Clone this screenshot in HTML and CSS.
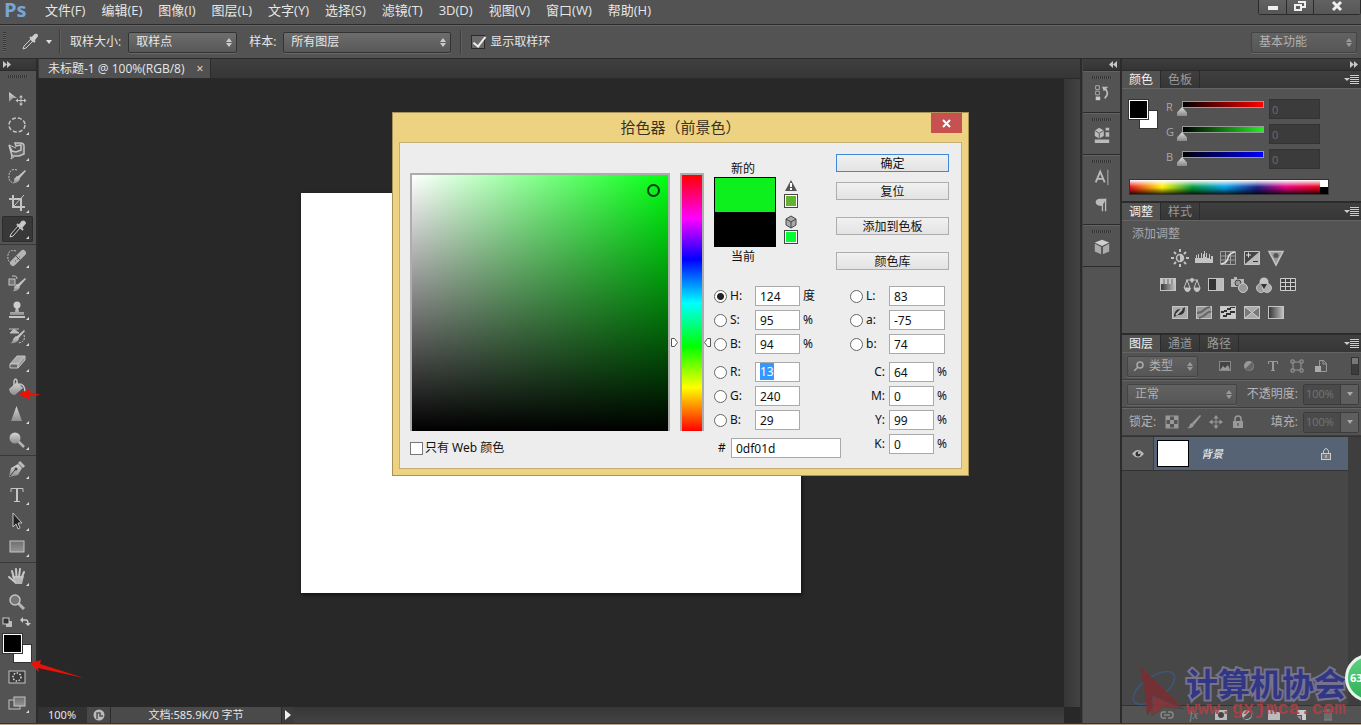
FILE: index.html
```
<!DOCTYPE html>
<html lang="zh-CN">
<head>
    <meta charset="UTF-8">
    <meta name="viewport" content="width=device-width, initial-scale=1.0">
    <title>未标题-1 @ 100%(RGB/8)</title>
    <link rel="stylesheet" href="styles.css">
</head>
<body>
    <!-- gradients shared by the icons -->
    <svg class="defs" width="0" height="0">
        <defs>
            <linearGradient id="metal" x1="0" y1="0" x2="0" y2="1"><stop offset="0" stop-color="#d6d6d6"/><stop offset="1" stop-color="#8e8e8e"/></linearGradient>
            <linearGradient id="fade" x1="0" y1="0" x2="1" y2="0"><stop offset="0" stop-color="#333"/><stop offset="1" stop-color="#c4c4c4"/></linearGradient>
            <linearGradient id="plate" x1="0" y1="0" x2="0" y2="1"><stop offset="0" stop-color="#6e6e6e"/><stop offset="1" stop-color="#949494"/></linearGradient>
        </defs>
    </svg>

    <header class="menubar">
        <div class="logo">Ps</div>
        <nav class="menu">
            <a href="#">文件(F)</a>
            <a href="#">编辑(E)</a>
            <a href="#">图像(I)</a>
            <a href="#">图层(L)</a>
            <a href="#">文字(Y)</a>
            <a href="#">选择(S)</a>
            <a href="#">滤镜(T)</a>
            <a href="#">3D(D)</a>
            <a href="#">视图(V)</a>
            <a href="#">窗口(W)</a>
            <a href="#">帮助(H)</a>
        </nav>
        <div class="window-buttons">
            <button aria-label="最小化"><svg width="12" height="12"><rect x="1" y="6" width="10" height="4" fill="#eee"/></svg></button>
            <button aria-label="还原"><svg width="14" height="12"><path d="M5 2h7v5H8M2 5h6v5H2z" fill="none" stroke="#eee" stroke-width="2"/></svg></button>
            <button class="wide" aria-label="关闭"><svg width="12" height="12"><path d="M2 2l8 8M10 2l-8 8" stroke="#eee" stroke-width="3"/></svg></button>
        </div>
    </header>

    <div class="options">
        <span class="grip-v"></span>
        <svg class="opt-tool" width="18" height="18" viewBox="0 0 18 18"><path d="M10 6l2 2-7 7-3 1 1-3z" fill="#555" stroke="#ccc"/><path d="M9 4l5 5M10 6l4-4q2-1 2 1l-4 5z" fill="#d8d8d8" stroke="#ccc" stroke-width="2"/></svg>
        <span class="caret"></span>
        <span class="divider"></span>
        <label for="sample-size">取样大小:</label>
        <span class="select size-m"><select id="sample-size"><option>取样点</option></select></span>
        <label for="sample">样本:</label>
        <span class="select size-l"><select id="sample"><option>所有图层</option></select></span>
        <span class="divider"></span>
        <label class="check"><input type="checkbox" checked>显示取样环</label>
        <span class="select size-s dim push"><select aria-label="工作区"><option>基本功能</option></select></span>
    </div>

    <div class="workspace">
        <aside class="tools">
            <div class="strip-head left"><svg width="8" height="7"><path d="M0 0l4 3.500L0 7zM4 0l4 3.500L4 7z" fill="#c8c8c8"/></svg></div>
            <div class="grip"></div>
            <div class="tool-group">
                <button class="tool plain" aria-label="移动"><svg viewBox="0 0 20 20"><path d="M2 3l8 6H6l-4 4z" fill="url(#metal)"/><path d="M14 7v9M9.500 11.500h9" stroke="#c4c4c4"/><path d="M12 8.500l2-2.500 2 2.500zM12 14.500l2 2.500 2-2.500zM11 9.500l-2.500 2 2.500 2zM17 9.500l2.500 2-2.500 2z" fill="#c4c4c4"/></svg></button>
                <button class="tool" aria-label="椭圆选框"><svg viewBox="0 0 20 20"><ellipse cx="10" cy="10" rx="8" ry="7" fill="none" stroke="#c4c4c4" stroke-width="1.500" stroke-dasharray="4 2"/></svg></button>
                <button class="tool" aria-label="套索"><svg viewBox="0 0 20 20"><path d="M2 4l3 11h7l5-2V5q0-3-4-3H8l1 3 5-1v5l-5 2-4-1z" fill="#666" stroke="#c4c4c4" stroke-width="1.500"/><path d="M2 4l7 3M5 14l-1 4 3-2" fill="none" stroke="#c4c4c4"/></svg></button>
                <button class="tool" aria-label="快速选择"><svg viewBox="0 0 20 20"><path d="M10 3Q3 1 2 8t5 8" fill="none" stroke="#c4c4c4" stroke-dasharray="2 1"/><path d="M18 3l1 1-7 8-2-2z" fill="#c4c4c4"/><path d="M10 9l3 3q-2 5-8 4 3-1 2-4z" fill="url(#metal)"/></svg></button>
                <button class="tool" aria-label="裁剪"><svg viewBox="0 0 20 20"><path d="M2 6h12v12M6 2v12h12" fill="none" stroke="#c4c4c4" stroke-width="2"/><path d="M7 13L17 2" stroke="#c4c4c4"/></svg></button>
                <button class="tool active" aria-label="吸管"><svg viewBox="0 0 20 20"><path d="M11 7l2 2-7 8-3 1 1-3z" fill="#333" stroke="#ccc"/><path d="M10 5l6 6M12 7l3-4q2-1 3 1l-4 5z" fill="#d0d0d0" stroke="#c4c4c4" stroke-width="2"/></svg></button>
            </div>
            <div class="tool-group">
                <button class="tool" aria-label="修复画笔"><svg viewBox="0 0 20 20"><path d="M9 3Q2 1 1 7t4 9" fill="none" stroke="#c4c4c4" stroke-dasharray="2 1"/><path d="M6 15l10-10" stroke="#b5b5b5" stroke-width="6" stroke-linecap="round"/><path d="M9 8l5 5M8 13h1M10 11h1M12 9h1" stroke="#555"/></svg></button>
                <button class="tool" aria-label="画笔"><svg viewBox="0 0 20 20"><rect x="2" y="5" width="6" height="6" fill="#777" stroke="#c4c4c4"/><path d="M5 2h3q2 0 2 3" fill="none" stroke="#c4c4c4"/><path d="M18 4l1 1-7 8-2-2z" fill="#c4c4c4"/><path d="M10 10l3 3q-2 5-8 4 3-1 2-4z" fill="url(#metal)"/></svg></button>
                <button class="tool" aria-label="仿制图章"><svg viewBox="0 0 20 20"><circle cx="10" cy="5" r="3.500" fill="#ccc"/><path d="M9 7h2l1 5h5v3H3v-3h5z" fill="url(#metal)"/><path d="M2 17h16" stroke="#c4c4c4" stroke-width="2"/></svg></button>
                <button class="tool" aria-label="历史记录画笔"><svg viewBox="0 0 20 20"><path d="M2 3h10M3 7l4-4 5 4z" stroke="#bbb" fill="#bbb"/><path d="M17 4l1 1-7 8-2-2z" fill="#c4c4c4"/><path d="M9 10l3 3q-2 5-9 4 3-1 3-4z" fill="url(#metal)"/><path d="M17 9q2 7-6 8" fill="none" stroke="#c4c4c4" stroke-dasharray="2 1"/></svg></button>
                <button class="tool" aria-label="橡皮擦"><svg viewBox="0 0 20 20"><path d="M3 12l7-8h8l-7 8z" fill="#aaa" stroke="#c4c4c4"/><path d="M3 12h8v4H3z" fill="#666" stroke="#c4c4c4"/><path d="M11 12l7-8v4l-7 8z" fill="#999" stroke="#c4c4c4"/></svg></button>
                <button class="tool" aria-label="油漆桶"><svg viewBox="0 0 20 20"><path d="M2 11l8-7 6 6-8 7q-5 0-6-6z" fill="url(#metal)"/><path d="M7 8V3q2-4 3 0v5M12 6q6 0 6 8" fill="none" stroke="#c4c4c4" stroke-width="1.500"/></svg></button>
                <button class="tool" aria-label="锐化"><svg viewBox="0 0 20 20"><path d="M9.500 2l5.500 15H4z" fill="url(#metal)"/></svg></button>
                <button class="tool" aria-label="减淡"><svg viewBox="0 0 20 20"><path d="M10 10l7 7" stroke="#b5b5b5" stroke-width="2.500"/><circle cx="8" cy="8" r="5.500" fill="url(#metal)"/></svg></button>
            </div>
            <div class="tool-group">
                <button class="tool" aria-label="钢笔"><svg viewBox="0 0 20 20"><path d="M2 18l2-9 7-4 4 4-4 7z" fill="url(#metal)"/><path d="M12 3l5 5" stroke="#bbb" stroke-width="3"/><path d="M3 17l5-6" stroke="#444"/><circle cx="9" cy="10" r="1.500" fill="#444"/></svg></button>
                <button class="tool" aria-label="文字"><svg viewBox="0 0 20 20"><path d="M4 7V3.500h12V7M7 16.500h6" fill="none" stroke="#c4c4c4"/><path d="M10 3v13" stroke="#c4c4c4" stroke-width="2"/></svg></button>
                <button class="tool" aria-label="路径选择"><svg viewBox="0 0 20 20"><path d="M6 2l9 10h-4l2 5-2 1-2-5-3 3z" fill="#222" stroke="#c4c4c4"/></svg></button>
                <button class="tool" aria-label="矩形"><svg viewBox="0 0 20 20"><rect x="3" y="4" width="14" height="11" fill="url(#plate)" stroke="#c4c4c4"/></svg></button>
            </div>
            <div class="tool-group">
                <button class="tool" aria-label="抓手"><svg viewBox="0 0 20 20"><path d="M5 10h12l-2 8H8z" fill="#b5b5b5"/><path d="M7 12L5 5M9.500 11L9 3M12 11l1-8M14.500 12L17 6M8 16l-6-5" stroke="#c8c8c8" stroke-width="2" stroke-linecap="round"/></svg></button>
                <button class="tool plain" aria-label="缩放"><svg viewBox="0 0 20 20"><path d="M11 11l6 6" stroke="#b5b5b5" stroke-width="3"/><circle cx="8" cy="8" r="5" fill="#777" stroke="#c4c4c4" stroke-width="1.500"/></svg></button>
            </div>
            <div class="swap">
                <svg width="11" height="10"><rect x="4" y="4" width="6" height="6" fill="#bbb"/><rect x="1" y="1" width="6" height="6" fill="#333" stroke="#ccc"/></svg>
                <svg width="11" height="10"><path d="M2 3h4q2 0 2 4" fill="none" stroke="#ccc" stroke-width="1.500"/><path d="M0 3l3-3v6zM5 6h6l-3 3z" fill="#ccc"/></svg>
            </div>
            <div class="swatches"><span class="bg"></span><span class="fg"></span></div>
            <button class="tool plain" aria-label="快速蒙版"><svg viewBox="0 0 20 20"><rect x="2" y="4" width="16" height="12" fill="#3c3c3c" stroke="#c4c4c4"/><circle cx="10" cy="10" r="4" fill="none" stroke="#ddd" stroke-width="1.500" stroke-dasharray="1.500 1.500"/></svg></button>
            <button class="tool" aria-label="屏幕模式"><svg viewBox="0 0 20 20"><rect x="2" y="7" width="11" height="9" fill="#555" stroke="#c4c4c4"/><rect x="7" y="4" width="11" height="9" fill="url(#plate)" stroke="#c4c4c4"/></svg></button>
        </aside>

        <main class="document">
            <div class="doc-tabs">
                <div class="doc-tab">未标题-1 @ 100%(RGB/8)<button aria-label="关闭文档">×</button></div>
            </div>
            <div class="stage">
                <div class="canvas-area"><div class="paper"></div></div>
                <div class="v-scroll"></div>
            </div>
            <footer class="status">
                <span class="zoom-level">100%</span>
                <span class="status-icon"><svg width="12" height="12"><circle cx="6" cy="6" r="5.500" fill="#bbb"/><path d="M4 10V4h3v3h3" fill="none" stroke="#555" stroke-width="1.500"/></svg></span>
                <span class="doc-size">文档:585.9K/0 字节</span>
                <button class="status-more" aria-label="更多"></button>
                <span class="h-scroll"></span>
            </footer>
        </main>

        <aside class="dock">
            <div class="strip-head right"><svg width="8" height="7"><path d="M4 0L0 3.500 4 7zM8 0L4 3.500 8 7z" fill="#c8c8c8"/></svg></div>
            <div class="dock-group">
                <div class="grip"></div>
                <button aria-label="历史记录"><svg viewBox="0 0 20 20"><path d="M3 2h4v4H3zM3 8h4v4H3z" fill="#444" stroke="#bbb"/><path d="M3 14h5v4H3z" fill="#ccc"/><path d="M10 3h7l-5 5z" fill="#bbb"/><path d="M13 5q6 5 0 11" fill="none" stroke="#bbb" stroke-width="2"/></svg></button>
            </div>
            <div class="dock-group">
                <div class="grip"></div>
                <button aria-label="属性"><svg viewBox="0 0 20 20"><path d="M2 5l5-3 5 3v6l-5 3-5-3z" fill="#bbb"/><path d="M2 5l5 3 5-3M7 8v6" fill="none" stroke="#555"/><path d="M14 2h4v3h-4zM14 7h4v5h-4zM2 15h16v4H2z" fill="#bbb"/></svg></button>
            </div>
            <div class="dock-group">
                <div class="grip"></div>
                <button aria-label="字符"><svg viewBox="0 0 20 20"><path d="M3 16L8 4l5 12M5 12h6" fill="none" stroke="#bbb" stroke-width="2"/><path d="M16.500 2v17" stroke="#bbb"/></svg></button>
                <button aria-label="段落"><svg viewBox="0 0 20 20"><path d="M15 3H8q-5 0-5 4t7 4z" fill="#bbb"/><path d="M10.500 4v13M14 3v14" stroke="#bbb" stroke-width="1.500"/></svg></button>
            </div>
            <div class="dock-group">
                <div class="grip"></div>
                <button aria-label="3D"><svg viewBox="0 0 20 20"><path d="M2 5l8-3 8 3-8 4z" fill="#d0d0d0"/><path d="M2 6l7 4v8l-7-3zM18 6l-7 4v8l7-3z" fill="#aaa"/></svg></button>
            </div>
        </aside>

        <aside class="panels">
            <div class="strip-head right"><svg width="8" height="7"><path d="M0 0l4 3.500L0 7zM4 0l4 3.500L4 7z" fill="#c8c8c8"/></svg></div>

            <section class="panel">
                <div class="tabs"><button class="on">颜色</button><button>色板</button><span class="panel-menu"></span></div>
                <div class="color-body">
                    <div class="swatches small"><span class="bg"></span><span class="fg"></span></div>
                    <div class="channels">
                        <div class="channel">
                            <label for="ch-r">R</label>
                            <div class="slider"><div class="ramp ramp-r"></div><input id="ch-r" type="range" min="0" max="255" value="0"></div>
                            <input type="text" value="0" aria-label="R 值">
                        </div>
                        <div class="channel">
                            <label for="ch-g">G</label>
                            <div class="slider"><div class="ramp ramp-g"></div><input id="ch-g" type="range" min="0" max="255" value="0"></div>
                            <input type="text" value="0" aria-label="G 值">
                        </div>
                        <div class="channel">
                            <label for="ch-b">B</label>
                            <div class="slider"><div class="ramp ramp-b"></div><input id="ch-b" type="range" min="0" max="255" value="0"></div>
                            <input type="text" value="0" aria-label="B 值">
                        </div>
                    </div>
                </div>
                <div class="spectrum"><span class="rainbow"></span><span class="bw"></span></div>
            </section>

            <section class="panel">
                <div class="tabs"><button class="on">调整</button><button>样式</button><span class="panel-menu"></span></div>
                <div class="adjust">
                    <p>添加调整</p>
                    <div class="icon-row">
                        <svg viewBox="0 0 18 18"><circle cx="9" cy="9" r="3.500" fill="#555" stroke="#c4c4c4" stroke-width="1.500"/><path d="M9 5.500v7a3.500 3.500 0 0 0 0-7z" fill="#c4c4c4"/><path d="M9 0v3M9 15v3M0 9h3M15 9h3M3 3l2 2M13 13l2 2M15 3l-2 2M5 13l-2 2" stroke="#c4c4c4" stroke-width="2"/></svg>
                        <svg viewBox="0 0 18 18"><path d="M0 14V9h1V6h1v3h1V5h1v4h2V4h1v5h1V5h1V2h1v6h1V4h1v5h2V5h1v5h1V7h2v7z" fill="#c4c4c4"/></svg>
                        <svg viewBox="0 0 18 18"><path d="M1.500 2.500h15v13h-15zM6.500 2v14M11.500 2v14M1 7h16M1 11h16" fill="none" stroke="#a0a0a0"/><path d="M2 15Q8 14 9 9t7-6" fill="none" stroke="#ddd" stroke-width="1.500"/></svg>
                        <svg viewBox="0 0 18 18"><path d="M1.500 2.500h15v13h-15z" fill="#444" stroke="#c4c4c4"/><path d="M16 3v12H2z" fill="#b8b8b8"/><path d="M3 6h5M5.500 3.500v5" stroke="#ddd"/><path d="M10 12.500h5" stroke="#333"/></svg>
                        <svg viewBox="0 0 18 18"><path d="M2 2.500h14L9 16z" fill="#999" stroke="#c4c4c4" stroke-width="1.500"/><circle cx="9" cy="6.500" r="2.500" fill="#555"/></svg>
                    </div>
                    <div class="icon-row">
                        <svg viewBox="0 0 18 18"><rect x="1.500" y="2.500" width="15" height="12" fill="url(#fade)" stroke="#c4c4c4"/><path d="M2 3h14v5H2z" fill="#c4c4c4"/><path d="M5 3v5M9 3v5M13 3v5" stroke="#666"/></svg>
                        <svg viewBox="0 0 18 18"><path d="M3 4h12M9 2v5M4 4L1 12h6zM14 4l-3 8h6z" fill="none" stroke="#c4c4c4"/><path d="M1 12h7q-1 4-3.500 4T1 12zM10.500 12h7q-1 4-3.500 4t-3.500-4z" fill="#c4c4c4"/><circle cx="9" cy="4" r="2" fill="#c4c4c4"/></svg>
                        <svg viewBox="0 0 18 18"><rect x="1.500" y="2.500" width="15" height="12" fill="#333" stroke="#c4c4c4"/><rect x="9" y="3" width="7" height="11" fill="#bbb"/></svg>
                        <svg viewBox="0 0 18 18"><path d="M0 3h3V1h3v2h7v8H0z" fill="#b8b8b8"/><circle cx="7" cy="7" r="3" fill="#999" stroke="#444"/><circle cx="12" cy="12" r="4.500" fill="#999" stroke="#ccc"/></svg>
                        <svg viewBox="0 0 18 18"><circle cx="9" cy="6" r="4.500" fill="#c4c4c4"/><circle cx="6" cy="12" r="4.500" fill="#9c9c9c" stroke="#c4c4c4"/><circle cx="12" cy="12" r="4.500" fill="#b0b0b0" stroke="#c4c4c4"/><path d="M6 8l6 0-3 5z" fill="#333"/></svg>
                        <svg viewBox="0 0 18 18"><path d="M1.500 2.500h15v12h-15z" fill="#444" stroke="#ccc"/><path d="M6.500 2v13M11.500 2v13M1 6.500h16M1 10.500h16" stroke="#ccc"/></svg>
                    </div>
                    <div class="icon-row">
                        <svg viewBox="0 0 18 18"><rect x="1.500" y="3.500" width="15" height="12" fill="#aaa" stroke="#c4c4c4"/><path d="M3 14Q3 5 11 6l3-2Q14 13 7 12z" fill="#333"/><path d="M5 12l6-6" stroke="#bbb" stroke-width="2"/></svg>
                        <svg viewBox="0 0 18 18"><rect x="1.500" y="3.500" width="15" height="12" fill="#999" stroke="#c4c4c4"/><path d="M2 10q4 0 7-3t6-3M4 15q4-1 7-4t5-2" fill="none" stroke="#666" stroke-width="2"/></svg>
                        <svg viewBox="0 0 18 18"><rect x="1.500" y="3.500" width="15" height="12" fill="#ccc" stroke="#c4c4c4"/><path d="M2 10h3V9h3V7h4V5h4V4h-5v1H8v2H5v1H2zM4 14h4v-2h4v-2h4V8h-5v2H7v2H4z" fill="#333"/></svg>
                        <svg viewBox="0 0 18 18"><rect x="1.500" y="3.500" width="15" height="12" fill="#777" stroke="#c4c4c4"/><path d="M2 4h14L9 9zM2 15h14L9 9z" fill="#aaa"/><path d="M2 4l14 11M16 4L2 15" stroke="#ccc"/></svg>
                        <svg viewBox="0 0 18 18"><rect x="1.500" y="3.500" width="15" height="12" fill="url(#fade)" stroke="#c4c4c4"/></svg>
                    </div>
                </div>
            </section>

            <section class="panel layers">
                <div class="tabs"><button class="on">图层</button><button>通道</button><button>路径</button><span class="panel-menu"></span></div>
                <div class="layer-row filter">
                    <span class="select kind dim"><svg class="lens" width="10" height="10"><circle cx="6" cy="4" r="3" fill="none" stroke="#aaa" stroke-width="1.500"/><path d="M4 6L0 10" stroke="#aaa" stroke-width="1.500"/></svg><select aria-label="过滤类型"><option>类型</option></select></span>
                    <div class="filter-icons">
                        <svg viewBox="0 0 14 14"><rect x="1.500" y="2.500" width="11" height="9" fill="#444" stroke="#888"/><path d="M2 11l3-4 2 2 3-3 2 5z" fill="#999"/></svg>
                        <svg viewBox="0 0 14 14"><circle cx="7" cy="7" r="5" fill="#999"/><path d="M3 10L10 3a5 5 0 0 1 1 6q-4 5-8 1z" fill="#666"/></svg>
                        <svg viewBox="0 0 14 14"><path d="M2.500 5V2.500h9V5M5 11.500h4" fill="none" stroke="#999"/><path d="M7 2v9" stroke="#999" stroke-width="2"/></svg>
                        <svg viewBox="0 0 14 14"><path d="M3 3h8v8H3z" fill="none" stroke="#999"/><path d="M1 1h3v3H1zM10 1h3v3h-3zM1 10h3v3H1zM10 10h3v3h-3z" fill="#555" stroke="#999"/></svg>
                        <svg viewBox="0 0 14 14"><path d="M5.500 1.500h4l3 3v8h-7z" fill="#555" stroke="#999"/><path d="M9 1v4h4" fill="none" stroke="#999"/><rect x="1" y="7" width="6" height="6" fill="#aaa"/></svg>
                    </div>
                    <span class="toggle"></span>
                </div>
                <div class="layer-row">
                    <span class="select blend dim"><select aria-label="混合模式"><option>正常</option></select></span>
                    <label class="push" for="opacity">不透明度:</label>
                    <span class="percent"><input id="opacity" type="text" value="100%"><button aria-label="不透明度选项"></button></span>
                </div>
                <div class="layer-row">
                    <span class="lock-label">锁定:</span>
                    <div class="lock-icons">
                        <svg viewBox="0 0 14 14"><rect x="1" y="1" width="12" height="12" fill="#555" stroke="#999"/><path d="M1 1h4v4H1zM9 1h4v4H9zM5 5h4v4H5zM1 9h4v4H1zM9 9h4v4H9z" fill="#999"/></svg>
                        <svg viewBox="0 0 14 14"><path d="M13 0l1 1-7 9-2-2z" fill="#999"/><path d="M5 8l2 2q-2 4-7 3 3-1 3-4z" fill="#999"/></svg>
                        <svg viewBox="0 0 14 14"><path d="M7 2v10M2 7h10" stroke="#999"/><path d="M4.500 3.500L7 0l2.500 3.500zM4.500 10.500L7 14l2.500-3.500zM3.500 4.500L0 7l3.500 2.500zM10.500 4.500L14 7l-3.500 2.500z" fill="#999"/></svg>
                        <svg viewBox="0 0 14 14"><path d="M4 7V4q0-3 3-3t3 3v3" fill="none" stroke="#999" stroke-width="1.500"/><rect x="2" y="6" width="10" height="7" fill="#999"/><path d="M7 8v3" stroke="#444"/></svg>
                    </div>
                    <label class="push" for="fill">填充:</label>
                    <span class="percent"><input id="fill" type="text" value="100%"><button aria-label="填充选项"></button></span>
                </div>
                <div class="layer-list">
                    <div class="layer-items">
                        <div class="layer">
                            <button class="eye" aria-label="可见"><svg width="12" height="10"><path d="M0 5q6-8 12 0-6 7-12 0z" fill="#bbb"/><circle cx="6" cy="5" r="2.500" fill="#333"/><circle cx="7" cy="4" r="1" fill="#ddd"/></svg></button>
                            <div class="layer-main">
                                <span class="thumb"></span>
                                <em>背景</em>
                                <svg class="locked" width="10" height="12"><path d="M2.500 6V3q2.500-5 5 0v3" fill="none" stroke="#ccc"/><rect x="0.500" y="5.500" width="9" height="6" fill="#777" stroke="#ccc"/><path d="M5 7v3" stroke="#ddd"/></svg>
                            </div>
                        </div>
                    </div>
                    <div class="list-scroll"></div>
                </div>
                <div class="layer-tools">
                    <button aria-label="链接图层"><svg viewBox="0 0 14 12"><path d="M6 3H3Q1 3 1 6t2 3h3M8 3h3q2 0 2 3t-2 3H8M4 6h6" fill="none" stroke="#888" stroke-width="1.500"/></svg></button>
                    <button class="fx" aria-label="图层样式">fx</button>
                    <button aria-label="添加蒙版"><svg viewBox="0 0 14 12"><rect x="1" y="1" width="12" height="10" fill="#bbb"/><circle cx="7" cy="6" r="3" fill="#444"/></svg></button>
                    <button aria-label="调整图层"><svg viewBox="0 0 14 12"><circle cx="7" cy="6" r="5" fill="#bbb"/><path d="M3 9l7-7a5 5 0 0 1 1 6q-4 4-8 1z" fill="#555"/></svg></button>
                    <button aria-label="新建组"><svg viewBox="0 0 14 12"><path d="M1 1h5l1 2h6v8H1z" fill="#bbb"/></svg></button>
                    <button aria-label="新建图层"><svg viewBox="0 0 14 12"><path d="M3 1h9v10H8V6H3z" fill="#ccc"/><path d="M3 7l4 4V7z" fill="#999"/></svg></button>
                    <button aria-label="删除"><svg viewBox="0 0 14 12"><path d="M2 2h10M5 0h4M4 4v7M6 4v7M8 4v7M10 4v7M3 11h8" fill="none" stroke="#888"/></svg></button>
                </div>
            </section>
        </aside>
    </div>
    <div class="desktop-edge"></div>

    <!-- colour picker window -->
    <form class="dialog" role="dialog" aria-labelledby="picker-title">
        <div class="titlebar">
            <h1 id="picker-title">拾色器（前景色）</h1>
            <button type="button" class="close" aria-label="关闭"><svg width="9" height="9"><path d="M1 1l7 7M8 1L1 8" stroke="#fff" stroke-width="2"/></svg></button>
        </div>
        <div class="picker">
            <div class="picker-left">
                <div class="field-row">
                    <div class="field"><span class="ring"></span></div>
                    <div class="hue">
                        <svg class="arrow-l" width="9" height="11"><path d="M1.500 1.500h3l3 4-3 4h-3z" fill="#fff" stroke="#555"/></svg>
                        <svg class="arrow-r" width="9" height="11"><path d="M7.500 1.500h-3l-3 4 3 4h3z" fill="#fff" stroke="#555"/></svg>
                    </div>
                </div>
                <label class="web-only"><input type="checkbox">只有 Web 颜色</label>
            </div>

            <div class="picker-right">
                <div class="picker-top">
                    <div class="compare">
                        <span>新的</span>
                        <div class="chips"><i class="new"></i><i class="old"></i></div>
                        <span>当前</span>
                    </div>
                    <div class="warnings">
                        <svg width="14" height="14"><path d="M7 1l6 11H1z" fill="#555"/><path d="M7 4v4M7 9v2" stroke="#fff" stroke-width="2"/></svg>
                        <i class="gamut"></i>
                        <svg width="14" height="14"><path d="M2 4l5-3 5 3v6l-5 3-5-3z" fill="#aaa" stroke="#444"/><path d="M2 4l5 3 5-3M7 7v6" fill="none" stroke="#444"/></svg>
                        <i class="websafe"></i>
                    </div>
                    <div class="actions">
                        <button type="submit" class="default">确定</button>
                        <button type="button">复位</button>
                        <button type="button" class="gap">添加到色板</button>
                        <button type="button" class="gap">颜色库</button>
                    </div>
                </div>
                <div class="values">
                    <div class="col">
                        <div class="value"><label><input type="radio" name="axis" checked>H:</label><input type="text" value="124" aria-label="H"><span>度</span></div>
                        <div class="value"><label><input type="radio" name="axis">S:</label><input type="text" value="95" aria-label="S"><span>%</span></div>
                        <div class="value"><label><input type="radio" name="axis">B:</label><input type="text" value="94" aria-label="B"><span>%</span></div>
                        <div class="value split"><label><input type="radio" name="axis">R:</label><div class="textbox" contenteditable="true" role="textbox" aria-label="R"><mark>13</mark></div></div>
                        <div class="value"><label><input type="radio" name="axis">G:</label><input type="text" value="240" aria-label="G"></div>
                        <div class="value"><label><input type="radio" name="axis">B:</label><input type="text" value="29" aria-label="B"></div>
                        <div class="value hex"><label for="hex">#</label><input id="hex" type="text" value="0df01d"></div>
                    </div>
                    <div class="col second">
                        <div class="value lab"><label><input type="radio" name="axis">L:</label><input type="text" value="83" aria-label="L"></div>
                        <div class="value lab"><label><input type="radio" name="axis">a:</label><input type="text" value="-75" aria-label="a"></div>
                        <div class="value lab"><label><input type="radio" name="axis">b:</label><input type="text" value="74" aria-label="b"></div>
                        <div class="value cmyk split"><label for="c">C:</label><input id="c" type="text" value="64"><span>%</span></div>
                        <div class="value cmyk"><label for="m">M:</label><input id="m" type="text" value="0"><span>%</span></div>
                        <div class="value cmyk"><label for="y">Y:</label><input id="y" type="text" value="99"><span>%</span></div>
                        <div class="value cmyk"><label for="k">K:</label><input id="k" type="text" value="0"><span>%</span></div>
                    </div>
                </div>
            </div>
        </div>
    </form>

    <!-- tutorial arrows -->
    <svg class="pointer bucket-pointer" width="24" height="14"><path d="M0 6L12 1l-1 3 12 3-12 1 1 4z" fill="#e81208"/></svg>
    <svg class="pointer swatch-pointer" width="56" height="20"><path d="M0 3l11-3-1 4 44 14L8 8l1 4z" fill="#e81208"/></svg>

    <!-- site watermark -->
    <div class="watermark">
        <svg width="56" height="54" viewBox="0 0 56 54"><ellipse cx="24" cy="24" rx="24" ry="11" transform="rotate(-35 24 24)" fill="none" stroke="#3d5a80" stroke-width="1.500"/><path d="M10 2l44 43-25-9-12 16-2-22z" fill="#7c2e33"/><path d="M22 31l32 14-20-2-12 9z" fill="#8e3439" stroke="#474747"/></svg>
        <div class="mark-text">
            <strong>计算机协会</strong>
            <span>www.gxjmca.com</span>
        </div>
    </div>
    <div class="badge">63</div>
</body>
</html>
```
FILE: styles.css
```
:root {
    --panel: #535353;
    --dark: #282828;
    --line: #2b2b2b;
    --text: #e6e6e6;
    --muted: #a8a8a8;
    --gold: #edd282;
}
* {
    box-sizing: border-box;
}
body {
    margin: 0;
    height: 100vh;
    display: flex;
    flex-direction: column;
    overflow: hidden;
    position: relative;
    background: var(--panel);
    color: var(--text);
    font: 12px/16px "Open Sans", "Noto Sans CJK SC", sans-serif;
}
button, input, select {
    font: inherit;
    color: inherit;
    margin: 0;
}
button {
    padding: 0;
    border: 0;
    background: none;
}
svg {
    display: block;
    flex: none;
}
.defs {
    position: absolute;
}

/* menu bar */
.menubar {
    display: flex;
    height: 25px;
    flex: none;
    border-bottom: 1px solid var(--line);
}
.logo {
    width: 45px;
    padding-left: 4px;
    font: bold 20px/20px "Open Sans", sans-serif;
    color: #78a5d6;
}
.menu {
    display: flex;
    gap: 16px;
    line-height: 20px;
}
.menu a {
    color: var(--text);
    text-decoration: none;
    font-size: 13px;
}
.window-buttons {
    display: flex;
    margin-left: auto;
    height: 15px;
    border: 1px solid var(--line);
    border-top: 0;
    border-radius: 0 0 3px 3px;
}
.window-buttons button {
    width: 27px;
    display: flex;
    justify-content: center;
    background: linear-gradient(#626262, #565656);
    border-left: 1px solid var(--line);
}
.window-buttons button:first-child {
    border-left: 0;
}
.window-buttons .wide {
    width: 47px;
}

/* tool options */
.options {
    display: flex;
    align-items: center;
    height: 34px;
    flex: none;
    padding: 0 4px 0 3px;
    border-top: 1px solid #666;
    border-bottom: 1px solid var(--line);
}
.grip-v {
    width: 3px;
    height: 20px;
    background: repeating-linear-gradient(#333 0 1px, #666 1px 2px);
}
.opt-tool {
    margin-left: 15px;
}
.caret {
    margin-left: 7px;
    border: 3px solid transparent;
    border-top: 4px solid #ddd;
    border-bottom: 0;
}
.divider {
    width: 2px;
    height: 24px;
    margin: 0 9px 0 7px;
    background: #3c3c3c;
    border-right: 1px solid #606060;
}
.select {
    position: relative;
    display: flex;
    align-items: center;
    height: 21px;
    border: 1px solid #333;
    border-radius: 2px;
    background: linear-gradient(#6d6d6d, #585858);
    box-shadow: 0 1px 0 #676767;
}
.select select {
    appearance: none;
    flex: 1;
    min-width: 0;
    height: 19px;
    padding: 0 7px;
    border: 0;
    outline: 0;
    background: none;
}
.select::before,
.select::after {
    content: "";
    position: absolute;
    right: 4px;
    border: 3px solid transparent;
}
.select::before {
    top: 5px;
    border-top: 0;
    border-bottom: 4px solid #ccc;
}
.select::after {
    bottom: 5px;
    border-bottom: 0;
    border-top: 4px solid #ccc;
}
.select.dim {
    color: #b0b0b0;
    border-color: #444;
    background: linear-gradient(#626262, #565656);
}
.select.dim::before { border-bottom-color: #999; }
.select.dim::after { border-top-color: #999; }
.size-m { width: 109px; margin: 0 12px 0 7px; }
.size-l { width: 168px; margin: 0 2px 0 7px; }
.size-s { width: 106px; }
.push { margin-left: auto; }
.check {
    display: flex;
    align-items: center;
    gap: 5px;
}
.check input {
    appearance: none;
    position: relative;
    width: 14px;
    height: 14px;
    border: 1px solid #2c2c2c;
    background: #6a6a6a;
}
.check input:checked::after {
    content: "";
    position: absolute;
    left: 4px;
    top: -2px;
    width: 5px;
    height: 11px;
    border: solid #eee;
    border-width: 0 2px 2px 0;
    transform: rotate(38deg);
}

/* workspace columns */
.workspace {
    display: flex;
    flex: 1;
    min-height: 0;
    background: var(--line);
}
.strip-head {
    display: flex;
    align-items: center;
    height: 12px;
    flex: none;
    padding: 0 3px;
    background: linear-gradient(#3e3e3e, #343434);
    border-bottom: 1px solid var(--line);
}
.strip-head.right {
    justify-content: flex-end;
}
.grip {
    width: 20px;
    height: 3px;
    flex: none;
    background: repeating-linear-gradient(90deg, #333 0 1px, #5c5c5c 1px 2px);
}
.tools {
    width: 36px;
    margin-right: 2px;
    display: flex;
    flex-direction: column;
    flex: none;
    background: var(--panel);
}
.tools > .grip {
    margin: 4px 0 8px 8px;
}
.tool-group + .tool-group {
    border-top: 1px solid #383838;
    margin-top: 2px;
}
.tool {
    position: relative;
    display: flex;
    align-items: center;
    width: 31px;
    height: 26px;
    margin-left: 2px;
    padding-left: 5px;
}
.tool svg {
    width: 20px;
    height: 20px;
}
.tool::after {
    content: "";
    position: absolute;
    right: 4px;
    bottom: 3px;
    border-left: 3px solid transparent;
    border-bottom: 3px solid #ddd;
}
.tool.plain::after {
    display: none;
}
.tool.active {
    background: #383838;
    box-shadow: inset 0 0 0 1px #2c2c2c;
    border-radius: 2px;
}
.swap {
    display: flex;
    justify-content: space-between;
    width: 29px;
    margin: 2px 0 7px 2px;
}
.swatches {
    position: relative;
    width: 29px;
    height: 29px;
    flex: none;
    margin: 0 0 1px 3px;
}
.swatches span {
    position: absolute;
    width: 19px;
    height: 19px;
    border: 1px solid #333;
}
.swatches .fg {
    left: 0;
    top: 0;
    background: #000;
    border-color: #fff;
    outline: 1px solid #333;
}
.swatches .bg {
    right: 0;
    bottom: 0;
    background: #fff;
}

/* document window */
.document {
    flex: 1;
    min-width: 0;
    display: flex;
    flex-direction: column;
    margin-right: 2px;
    background: var(--dark);
}
.doc-tabs {
    display: flex;
    height: 20px;
    flex: none;
    background: linear-gradient(#3f3f3f, #363636);
    border-bottom: 1px solid var(--line);
}
.doc-tab {
    display: flex;
    padding: 0 7px 0 9px;
    margin-left: 1px;
    gap: 12px;
    line-height: 20px;
    background: #515151;
    border-right: 1px solid var(--line);
}
.stage {
    flex: 1;
    display: flex;
    min-height: 0;
}
.canvas-area {
    flex: 1;
    display: flex;
    align-items: center;
    justify-content: center;
}
.paper {
    width: 500px;
    height: 400px;
    background: #fff;
    box-shadow: 1px 2px 4px #111;
}
.v-scroll {
    width: 16px;
    background: linear-gradient(90deg, #363636, #424242);
}
.status {
    display: flex;
    height: 16px;
    flex: none;
    line-height: 16px;
    font-family: "Noto Sans", "Noto Sans CJK SC", sans-serif;
}
.zoom-level {
    width: 49px;
    padding-left: 10px;
    background: #333;
    font-size: 11px;
}
.status-icon {
    width: 24px;
    display: flex;
    align-items: center;
    justify-content: center;
    background: #484848;
    border-right: 1px solid var(--line);
}
.doc-size {
    width: 170px;
    text-align: center;
    background: #4a4a4a;
    font-size: 11px;
}
.status-more {
    width: 13px;
    background: #3c3c3c;
    border-left: 1px solid var(--line);
}
.status-more::after {
    content: "";
    display: block;
    margin-left: 3px;
    width: 0;
    border: 5px solid transparent;
    border-left: 6px solid #eee;
    border-right: 0;
}
.h-scroll {
    flex: 1;
    margin-right: 16px;
    background: linear-gradient(#363636, #444);
}

/* collapsed dock */
.dock {
    width: 38px;
    flex: none;
    margin-right: 2px;
    display: flex;
    flex-direction: column;
    background: var(--panel);
    border-left: 1px solid #444;
}
.dock-group {
    display: flex;
    flex-direction: column;
    align-items: center;
    padding: 4px 0 5px;
    border-bottom: 1px solid var(--line);
    border-top: 1px solid #636363;
}
.dock-group button {
    display: flex;
    align-items: center;
    height: 28px;
}
.dock-group svg {
    width: 18px;
    height: 18px;
}

/* right panels */
.panels {
    width: 239px;
    flex: none;
    display: flex;
    flex-direction: column;
    background: var(--line);
}
.panel {
    background: var(--panel);
    margin-bottom: 2px;
}
.panel:first-of-type {
    padding-bottom: 6px;
}
.tabs {
    display: flex;
    height: 17px;
    line-height: 17px;
    background: linear-gradient(#3f3f3f, #363636);
}
.tabs button {
    width: 39px;
    border-right: 1px solid var(--line);
    color: #9a9a9a;
    line-height: 16px;
}
.tabs .on {
    background: var(--panel);
    color: #f0f0f0;
}
.panel-menu {
    position: relative;
    width: 9px;
    height: 9px;
    margin: 4px 2px 0 auto;
    background: repeating-linear-gradient(#ccc 0 1px, #333 1px 2px);
}
.panel-menu::before {
    content: "";
    position: absolute;
    left: -6px;
    top: 3px;
    border: 3px solid transparent;
    border-top-color: #ccc;
}
.color-body {
    display: flex;
    padding: 10px 0 0 7px;
    border-top: 1px solid #646464;
}
.swatches.small {
    margin: 1px 8px 0 0;
}
.channels {
    display: flex;
    flex-direction: column;
    gap: 5px;
}
.channel {
    display: flex;
    height: 20px;
}
.channel label {
    width: 16px;
    color: var(--muted);
    font-size: 11px;
}
.slider {
    width: 82px;
    padding-top: 2px;
}
.ramp {
    height: 7px;
    border: 1px solid #999;
}
.ramp-r { background: linear-gradient(90deg, #000, #f00); }
.ramp-g { background: linear-gradient(90deg, #000, #2e2); }
.ramp-b { background: linear-gradient(90deg, #000, #00f); }
.slider input {
    appearance: none;
    display: block;
    width: 92px;
    height: 9px;
    margin: -1px -5px 0;
    background: none;
}
.slider input::-webkit-slider-thumb {
    appearance: none;
    width: 10px;
    height: 9px;
    background: linear-gradient(#ddd, #888);
    clip-path: polygon(50% 0, 100% 60%, 100% 100%, 0 100%, 0 60%);
}
.channel input[type="text"] {
    width: 51px;
    height: 20px;
    margin-left: 5px;
    padding: 0 2px;
    border: 1px solid #333;
    background: #3b3b3b;
    color: #6c6c6c;
    font-size: 11px;
}
.spectrum {
    display: flex;
    width: 200px;
    height: 16px;
    margin: 10px 0 0 7px;
    border: 1px solid #333;
}
.rainbow {
    flex: 1;
    background:
        linear-gradient(#fff, rgba(255, 255, 255, 0) 50%, rgba(0, 0, 0, 0) 55%, rgba(0, 0, 0, 0.8)),
        linear-gradient(90deg, #e8141c, #fff000 17%, #009a3c 33%, #00a0e9 50%, #1d2088 67%, #e4007f 82%, #e60012);
}
.bw {
    width: 8px;
    background: linear-gradient(#fff 50%, #000 50%);
}
.adjust {
    padding: 5px 28px 8px 0;
    border-top: 1px solid #646464;
}
.adjust p {
    margin: 0 0 2px 10px;
    color: var(--muted);
}
.icon-row {
    display: flex;
    justify-content: center;
    align-items: center;
    gap: 6px;
    height: 27px;
}
.icon-row svg {
    width: 18px;
    height: 18px;
}

/* layers */
.layers {
    flex: 1;
    min-height: 0;
    display: flex;
    flex-direction: column;
    margin-bottom: 0;
}
.layers .tabs {
    flex: none;
}
.layer-row {
    display: flex;
    align-items: center;
    height: 28px;
    flex: none;
    padding: 0 2px 0 5px;
    border-top: 1px solid #646464;
    border-bottom: 1px solid #3c3c3c;
    color: #b4b4b4;
}
.kind {
    width: 71px;
    padding-left: 6px;
}
.kind .lens {
    margin-right: -2px;
}
.kind select {
    padding-right: 0;
}
.filter-icons {
    display: flex;
    gap: 10px;
    margin-left: 20px;
}
.filter-icons svg,
.lock-icons svg {
    width: 14px;
    height: 14px;
}
.toggle {
    width: 8px;
    height: 18px;
    margin-left: auto;
    border: 1px solid #333;
    background: linear-gradient(#777 40%, #3c3c3c 40%);
}
.blend {
    width: 110px;
}
.percent {
    display: flex;
    height: 21px;
    width: 56px;
    margin-left: 5px;
    border: 1px solid #3c3c3c;
    border-radius: 2px;
}
.percent input {
    width: 36px;
    padding: 0 2px;
    border: 0;
    background: #4a4a4a;
    color: #757575;
    font-size: 11px;
}
.percent button {
    flex: 1;
    display: flex;
    align-items: center;
    justify-content: center;
    background: #5e5e5e;
    border-left: 1px solid #3c3c3c;
}
.percent button::after {
    content: "";
    border: 3px solid transparent;
    border-top: 4px solid #aaa;
    border-bottom: 0;
}
.lock-label {
    margin-left: 2px;
}
.lock-icons {
    display: flex;
    gap: 8px;
    margin-left: 9px;
}
.layer-list {
    display: flex;
    flex: 1;
    min-height: 0;
    border-top: 1px solid #333;
    background: #474747;
}
.layer-items {
    flex: 1;
}
.layer {
    display: flex;
    height: 34px;
    border-bottom: 1px solid #333;
}
.eye {
    width: 32px;
    display: flex;
    align-items: center;
    justify-content: center;
    background: var(--panel);
    border-right: 1px solid #3c3c3c;
}
.layer-main {
    flex: 1;
    display: flex;
    align-items: center;
    padding: 0 17px 0 3px;
    background: #566375;
}
.thumb {
    width: 32px;
    height: 27px;
    border: 1px solid #000;
    background: #fff;
}
.layer-main em {
    margin-left: 12px;
    color: #fff;
    font-size: 11px;
}
.locked {
    margin-left: auto;
}
.list-scroll {
    width: 13px;
    background: #3e3e3e;
}
.layer-tools {
    display: flex;
    justify-content: space-between;
    align-items: center;
    height: 18px;
    flex: none;
    padding: 0 26px 0 38px;
    border-top: 1px solid #333;
}
.layer-tools svg {
    width: 14px;
    height: 12px;
}
.layer-tools .fx {
    width: 14px;
    color: #888;
    font: italic 12px/14px "Liberation Serif", serif;
}
.desktop-edge {
    height: 2px;
    flex: none;
    background: #b9a486;
    border-top: 1px solid #333;
}

/* picker window */
.dialog {
    position: absolute;
    top: 112px;
    left: 0;
    right: 0;
    width: 577px;
    margin: 0 auto;
    padding: 0 6px 6px;
    border: 1px solid #a8925a;
    background: var(--gold);
    color: #111;
    font-family: "Noto Sans", "Noto Sans CJK SC", sans-serif;
}
.titlebar {
    position: relative;
    height: 29px;
}
.titlebar h1 {
    margin: 0;
    text-align: center;
    font-size: 15px;
    font-weight: normal;
    line-height: 29px;
    color: #3a3222;
}
.close {
    position: absolute;
    right: 0;
    top: 0;
    width: 31px;
    height: 20px;
    display: flex;
    align-items: center;
    justify-content: center;
    background: #c75050;
}
.picker {
    display: flex;
    height: 327px;
    padding: 11px 12px 0 10px;
    border: 1px solid #c4ae74;
    background: #ededed;
}
.picker-left {
    padding-top: 19px;
}
.field-row {
    display: flex;
    gap: 10px;
}
.field {
    position: relative;
    width: 260px;
    height: 258px;
    border: 2px solid #adadad;
    border-bottom: 0;
    background: linear-gradient(rgba(0, 0, 0, 0), #000), linear-gradient(90deg, #fff, #00ff11);
}
.ring {
    position: absolute;
    left: 235px;
    top: 9px;
    width: 13px;
    height: 13px;
    border: 2px solid #063a08;
    border-radius: 50%;
}
.hue {
    position: relative;
    width: 24px;
    height: 258px;
    border: 2px solid #adadad;
    border-bottom: 0;
    background: linear-gradient(#f00, #f0f 17%, #00f 33%, #0ff 50%, #0f0 67%, #ff0 83%, #f00);
}
.arrow-l,
.arrow-r {
    position: absolute;
    top: 162px;
}
.arrow-l { left: -12px; }
.arrow-r { right: -10px; }
.web-only {
    display: flex;
    align-items: center;
    gap: 2px;
    margin-top: 9px;
}
.web-only input {
    appearance: none;
    width: 13px;
    height: 13px;
    border: 1px solid #777;
    background: #fff;
}
.picker-right {
    flex: 1;
    margin-left: 10px;
}
.picker-top {
    display: flex;
    height: 132px;
}
.compare {
    width: 62px;
    padding-top: 7px;
    text-align: center;
}
.compare span {
    display: block;
    margin-right: 4px;
}
.chips {
    height: 70px;
    margin: 0 0 2px;
    padding: 1px;
    background: #000;
}
.chips i {
    display: block;
    height: 34px;
}
.new { background: #0df01d; }
.old { background: #000; }
.warnings {
    display: flex;
    flex-direction: column;
    width: 14px;
    margin-left: 8px;
    padding-top: 25px;
}
.warnings i {
    width: 14px;
    height: 14px;
    margin: 1px 0 7px;
    border: 1px solid #444;
    box-shadow: inset 0 0 0 1px #fff;
}
.gamut { background: #62b332; }
.websafe { background: #00ff33; }
.actions {
    display: flex;
    flex-direction: column;
    gap: 10px;
    width: 113px;
    margin-left: auto;
}
.actions button {
    height: 18px;
    padding-top: 1px;
    line-height: 16px;
    border: 1px solid #adadad;
    background: linear-gradient(#f1f1f1, #e3e3e3);
}
.actions .default {
    border-color: #3c8ad8;
}
.actions .gap {
    margin-top: 7px;
}
.values {
    display: flex;
    justify-content: space-between;
}
.col {
    display: flex;
    flex-direction: column;
    gap: 4px;
}
.value {
    display: flex;
    align-items: center;
    height: 20px;
}
.value.split {
    margin-top: 4px;
}
.value label {
    display: flex;
    align-items: center;
    gap: 3px;
    width: 41px;
    line-height: 20px;
}
.value input[type="radio"] {
    appearance: none;
    width: 13px;
    height: 13px;
    border: 1px solid #666;
    border-radius: 50%;
    background: #fff;
}
.value input[type="radio"]:checked {
    background: radial-gradient(#222 3px, #fff 4px);
}
.value input[type="text"],
.textbox {
    width: 45px;
    height: 20px;
    padding: 0 4px;
    border: 1px solid #aaa;
    background: #fff;
    line-height: 18px;
    outline: 0;
}
.value mark {
    background: #3399ff;
    color: #fff;
}
.value span {
    width: 14px;
    margin-left: 3px;
}
.hex {
    margin-top: 4px;
}
.value.hex label {
    width: 17px;
    padding-left: 4px;
}
.value.hex input {
    width: 110px;
}
.second {
    width: 99px;
}
.value.lab label,
.value.cmyk label {
    width: 39px;
    flex: none;
}
.value.cmyk label {
    justify-content: flex-end;
    padding-right: 4px;
}
.value.lab input[type="text"] {
    width: 56px;
}

/* things lying over the page */
.pointer {
    position: absolute;
}
.bucket-pointer {
    left: 18px;
    top: 388px;
}
.swatch-pointer {
    left: 30px;
    top: 660px;
}
.watermark {
    position: absolute;
    right: 15px;
    bottom: 6px;
    display: flex;
    align-items: flex-end;
    opacity: 0.85;
    pointer-events: none;
}
.watermark svg {
    margin-bottom: 1px;
}
.mark-text {
    display: flex;
    flex-direction: column;
}
.mark-text strong {
    color: #2f3590;
    font: 700 32px/34px "Noto Sans CJK SC", sans-serif;
    -webkit-text-stroke: 4px #7f7b98;
    paint-order: stroke fill;
}
.mark-text span {
    color: #b04046;
    font: bold 19px/20px "Liberation Mono", monospace;
}
.badge {
    position: absolute;
    right: -32px;
    bottom: 23px;
    width: 48px;
    height: 48px;
    padding-left: 2px;
    border: 3px solid #e8f4ea;
    border-radius: 50%;
    background: linear-gradient(#5fd080, #2fb158);
    color: #fff;
    font: bold 11px/42px "Open Sans", sans-serif;
}
```
